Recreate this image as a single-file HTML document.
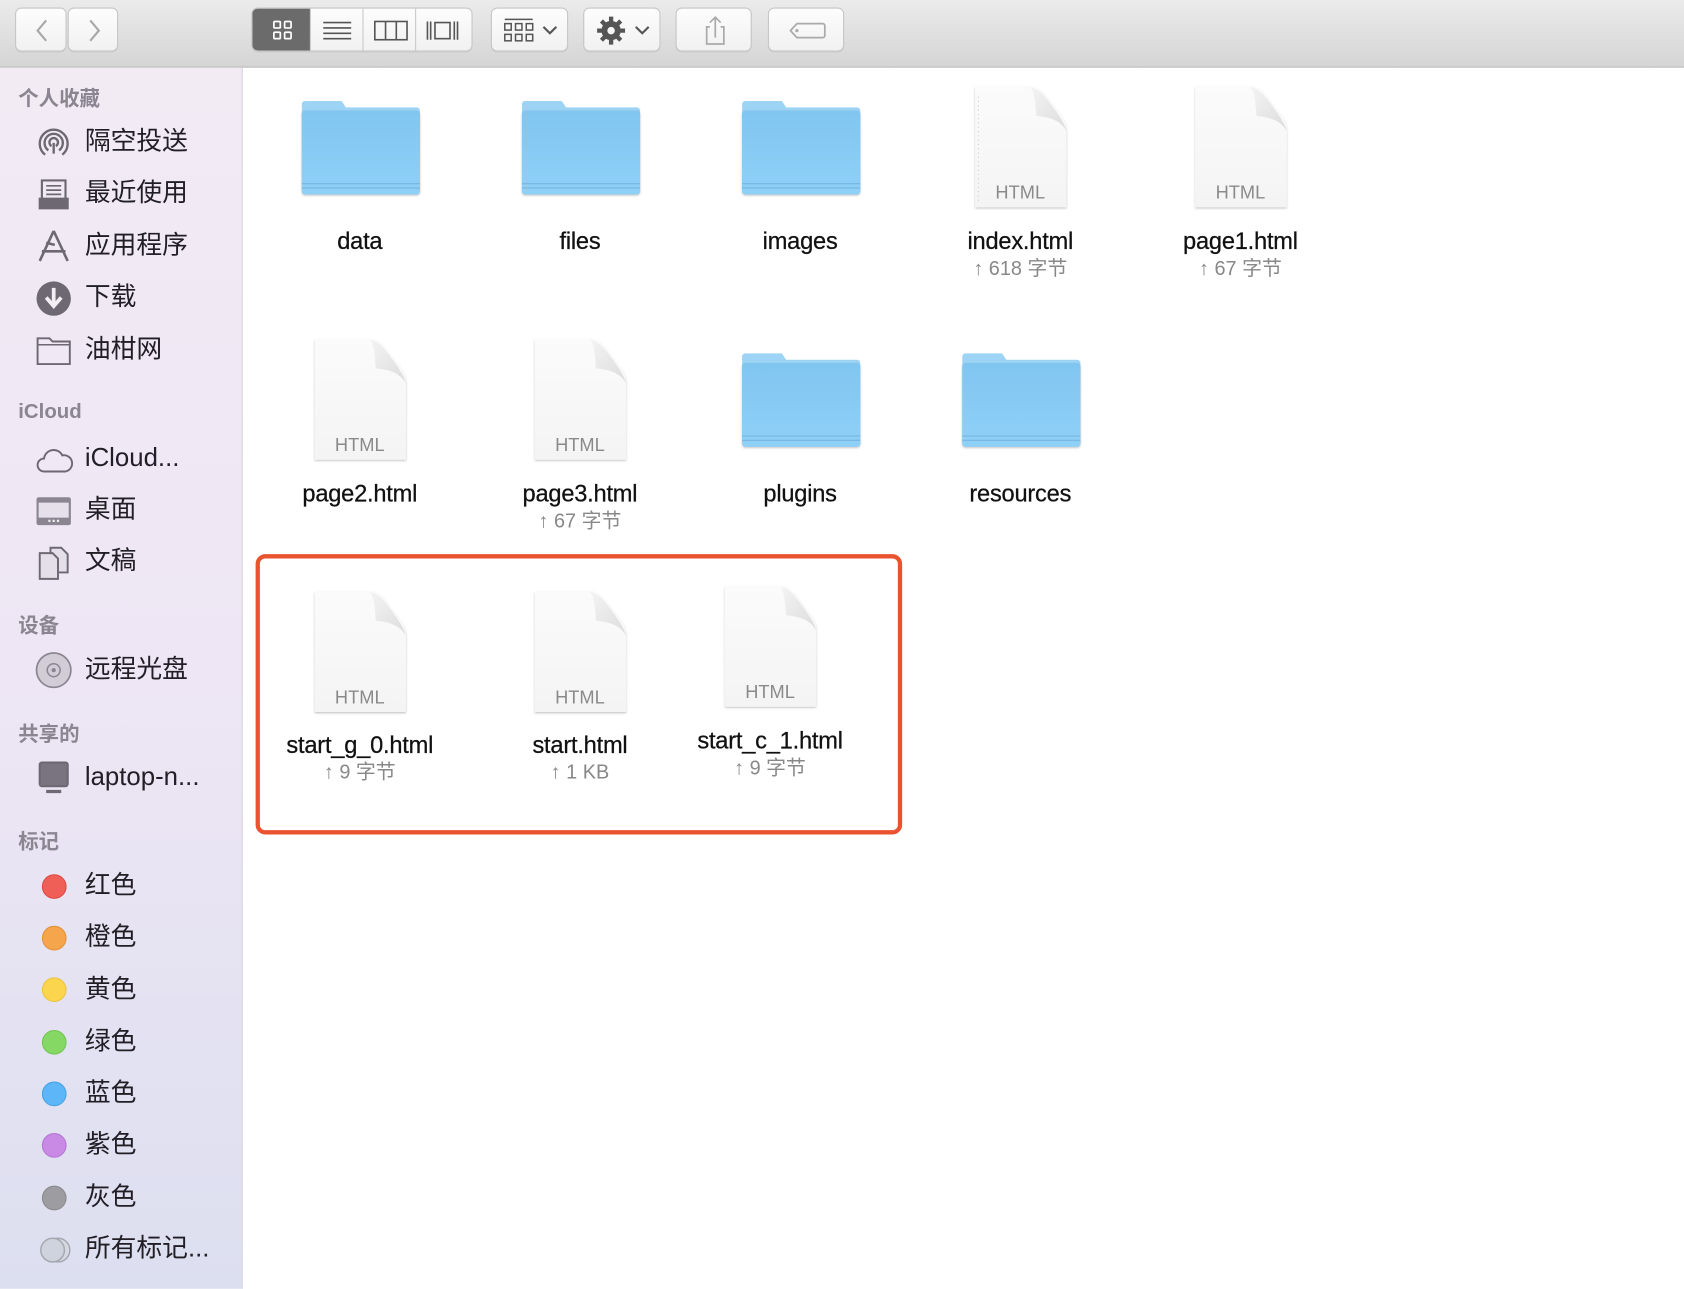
<!DOCTYPE html>
<html><head><meta charset="utf-8">
<style>
*{margin:0;padding:0;box-sizing:border-box}
html,body{width:1684px;height:1288px;overflow:hidden;background:#fff;font-family:"Liberation Sans","Noto Sans CJK SC",sans-serif}
#w{position:absolute;left:0;top:0;width:1568px;height:1200px;transform:scale(1.07398);transform-origin:0 0}
.tb{position:absolute;left:0;top:0;width:1568px;height:63px;background:linear-gradient(#ebebeb,#d5d5d5);border-bottom:1px solid #b5b5b5}
.btn{position:absolute;top:7px;height:41px;background:linear-gradient(#fdfdfd,#f1f1f1);border:1px solid #c6c6c6;border-radius:6px;box-shadow:0 1px 0 rgba(0,0,0,.06)}
.btn svg{position:absolute;left:0;top:0}
.sb{position:absolute;left:0;top:63px;width:226px;height:1137px;background:linear-gradient(#f2ebf4,#eee6f4 50%,#dcdff0);border-right:1px solid #d3d0dc}
.h{position:absolute;left:17px;font-size:19px;color:#8a8590;font-weight:bold}
.it{position:absolute;left:79px;font-size:24px;color:#221e26;line-height:30px}
.ic{position:absolute;left:33px}
.dot{position:absolute;left:39px;width:23px;height:23px;border-radius:50%}
.f{position:absolute;width:180px;text-align:center}
.nm{font-size:22px;color:#111;line-height:26px;letter-spacing:-0.2px;-webkit-text-stroke:0.25px #111}
.sub{font-size:18.5px;color:#888;line-height:24px}
.doc{position:absolute;overflow:visible}
.box{position:absolute;left:238px;top:516px;width:602px;height:261px;border:4px solid #e9532f;border-radius:9px}
</style></head><body><div id="w">
<svg width="0" height="0" style="position:absolute"><defs>
<linearGradient id="fg" x1="0" y1="0" x2="0" y2="1"><stop offset="0" stop-color="#80c6f1"/><stop offset="1" stop-color="#8fd0f7"/></linearGradient>
<linearGradient id="dg" x1="0" y1="0" x2="0" y2="1"><stop offset="0" stop-color="#fbfbfb"/><stop offset="1" stop-color="#f4f4f4"/></linearGradient>
<linearGradient id="cg" x1="0" y1="0" x2="1" y2="1"><stop offset="0" stop-color="#f4f4f4"/><stop offset="1" stop-color="#dcdcdc"/></linearGradient>
<filter id="sh" x="-10%" y="-10%" width="120%" height="120%"><feDropShadow dx="0" dy="1" stdDeviation="1" flood-opacity=".25"/></filter>
<symbol id="dc" viewBox="0 0 88 116" overflow="visible"><path d="M1 1H52C60 1 64 6 70 14L80 27C85 33 86 37 86 44V113H1Z" fill="url(#dg)" filter="url(#sh)"/><path d="M52 1C57 6 57 18 58 28C68 29 80 31 86 42C84 34 78 26 70 15C64 7 59 2 52 1Z" fill="url(#cg)"/></symbol>
<symbol id="fd" viewBox="0 0 112 92" overflow="visible"><path d="M1 4a3 3 0 0 1 3-3h34l4 6h66a3 3 0 0 1 3 3v75a3 3 0 0 1-3 3H4a3 3 0 0 1-3-3z" fill="#9dd3f4"/><rect x="1" y="10" width="110" height="78" rx="3" fill="url(#fg)" filter="url(#sh)"/><path d="M1 78h110M1 82h110" stroke="#74b6e2" stroke-width="1"/></symbol>
</defs></svg>
<div class="tb">
 <div class="btn" style="left:14px;width:48px"><svg width="48" height="41"><path d="M28 11 L20 20.5 L28 30" stroke="#a8a8a8" stroke-width="2" fill="none"/></svg></div>
 <div class="btn" style="left:63px;width:47px"><svg width="47" height="41"><path d="M20 11 L28 20.5 L20 30" stroke="#a8a8a8" stroke-width="2" fill="none"/></svg></div>
 <div class="btn" style="left:234px;width:206px;overflow:hidden">
  <div style="position:absolute;left:0;top:0;width:54px;height:41px;background:#6b6b6b"></div>
  <svg width="206" height="41">
   <g fill="none" stroke="#fff" stroke-width="1.6"><rect x="20" y="12" width="6" height="6" rx="1"/><rect x="30" y="12" width="6" height="6" rx="1"/><rect x="20" y="22" width="6" height="6" rx="1"/><rect x="30" y="22" width="6" height="6" rx="1"/></g>
   <g stroke="#555" stroke-width="1.5" fill="none"><path d="M66 13h26M66 18h26M66 23h26M66 28h26"/><rect x="114" y="12" width="30" height="17"/><path d="M124 12v17M134 12v17"/><rect x="170" y="13" width="14" height="15"/><path d="M163 12v17M166 12v17M188 12v17M191 12v17"/></g>
   <path d="M54 0v41M103 0v41M152 0v41" stroke="#c8c8c8"/>
  </svg></div>
 <div class="btn" style="left:457px;width:72px"><svg width="72" height="41"><g fill="none" stroke="#555" stroke-width="1.4"><path d="M12 10h26"/><rect x="12" y="14" width="6" height="6"/><rect x="22" y="14" width="6" height="6"/><rect x="32" y="14" width="6" height="6"/><rect x="12" y="24" width="6" height="6"/><rect x="22" y="24" width="6" height="6"/><rect x="32" y="24" width="6" height="6"/><path d="M48 17l6 6 6-6" stroke-width="2"/></g></svg></div>
 <div class="btn" style="left:543px;width:72px"><svg width="72" height="41"><g transform="translate(25 20.5)"><circle r="9" fill="#555"/><g stroke="#555" stroke-width="4"><path d="M0-13V13M-13 0H13M-9-9L9 9M9-9L-9 9"/></g><circle r="3.5" fill="#f5f5f5"/></g><path d="M48 17l6 6 6-6" stroke="#555" stroke-width="2" fill="none"/></svg></div>
 <div class="btn" style="left:629px;width:71px"><svg width="71" height="41"><g fill="none" stroke="#aaa" stroke-width="1.6"><path d="M31 17h-3v16h16V17h-3"/><path d="M36 27V8M31 13l5-5 5 5"/></g></svg></div>
 <div class="btn" style="left:715px;width:71px"><svg width="71" height="41"><path d="M26 14h24a2 2 0 0 1 2 2v9a2 2 0 0 1-2 2H26l-6-6.5z" fill="none" stroke="#aaa" stroke-width="1.6"/><circle cx="26" cy="20.5" r="1.5" fill="#aaa"/></svg></div>
</div>

<div class="sb"></div>
<div class="h" style="top:77px">个人收藏</div>
<svg class="ic" style="top:116px" width="34" height="34"><g fill="none" stroke="#6d6872" stroke-width="2.2"><path d="M9 28A13 13 0 1 1 25 28"/><path d="M12 24A8.5 8.5 0 1 1 22 24"/><path d="M15 20A4 4 0 1 1 19 20"/><path d="M17 17v10"/></g></svg>
<div class="it" style="top:117px">隔空投送</div>
<svg class="ic" style="top:164px" width="34" height="34"><path d="M6 4h22v20H6z" fill="none" stroke="#6d6872" stroke-width="2"/><path d="M10 9h14M10 13h14M10 17h14" stroke="#6d6872" stroke-width="1.6"/><path d="M3 20h28v11H3z" fill="#6d6872"/></svg>
<div class="it" style="top:165px">最近使用</div>
<svg class="ic" style="top:212px" width="34" height="34"><g stroke="#6d6872" stroke-width="2.4" fill="none"><path d="M17 3L4 31M17 3L30 31M6 22h22M10 14l8 2"/></g></svg>
<div class="it" style="top:214px">应用程序</div>
<svg class="ic" style="top:261px" width="34" height="34"><circle cx="17" cy="17" r="16" fill="#6d6872"/><path d="M17 7v16M10 16l7 8 7-8" stroke="#f3edf4" stroke-width="3.5" fill="none"/></svg>
<div class="it" style="top:262px">下载</div>
<svg class="ic" style="top:310px" width="34" height="34"><path d="M2 5h11l3 3h16v21H2z" fill="none" stroke="#6d6872" stroke-width="1.8"/><path d="M2 11h30" stroke="#6d6872" stroke-width="1.5"/></svg>
<div class="it" style="top:311px">油柑网</div>

<div class="h" style="top:373px">iCloud</div>
<svg class="ic" style="top:411px" width="36" height="34"><path d="M8 28a6 6 0 0 1 0-12 9 9 0 0 1 17-3 7.5 7.5 0 0 1 3 15z" fill="none" stroke="#6d6872" stroke-width="1.8"/></svg>
<div class="it" style="top:412px">iCloud...</div>
<svg class="ic" style="top:459px" width="34" height="34"><rect x="1" y="4" width="32" height="26" rx="2" fill="#8a8590"/><rect x="3" y="9" width="28" height="14" fill="#e6e0ea"/><path d="M12 26h2M16 26h2M20 26h2" stroke="#eee" stroke-width="2"/></svg>
<div class="it" style="top:460px">桌面</div>
<svg class="ic" style="top:507px" width="34" height="34"><g fill="#e4dfe8" stroke="#6d6872" stroke-width="1.8"><path d="M4 8h12l5 5v19H4z"/><path d="M14 3h10l6 6v17H21V13l-5-5h-2z"/></g></svg>
<div class="it" style="top:508px">文稿</div>

<div class="h" style="top:568px">设备</div>
<svg class="ic" style="top:607px" width="34" height="34"><circle cx="17" cy="17" r="16" fill="#d2ccd6" stroke="#8a8590" stroke-width="1.6"/><circle cx="17" cy="17" r="6" fill="none" stroke="#8a8590" stroke-width="1.4"/><circle cx="17" cy="17" r="2" fill="#8a8590"/></svg>
<div class="it" style="top:609px">远程光盘</div>
<div class="h" style="top:669px">共享的</div>
<svg class="ic" style="top:707px" width="34" height="36"><rect x="3" y="2" width="28" height="24" rx="3" fill="#6d6872"/><rect x="5" y="4" width="24" height="20" fill="#7a7480"/><path d="M10 30h14" stroke="#6d6872" stroke-width="3"/></svg>
<div class="it" style="top:709px">laptop-n...</div>

<div class="h" style="top:769px">标记</div>
<div class="dot" style="top:814px;background:#ef5f58;border:1px solid #dc4a44"></div><div class="it" style="top:810px">红色</div>
<div class="dot" style="top:862px;background:#f5a54c;border:1px solid #e4923a"></div><div class="it" style="top:858px">橙色</div>
<div class="dot" style="top:910px;background:#fcd54f;border:1px solid #ecc440"></div><div class="it" style="top:907px">黄色</div>
<div class="dot" style="top:959px;background:#86d864;border:1px solid #72c552"></div><div class="it" style="top:955px">绿色</div>
<div class="dot" style="top:1007px;background:#5cb6f7;border:1px solid #48a3e5"></div><div class="it" style="top:1003px">蓝色</div>
<div class="dot" style="top:1055px;background:#c98ae6;border:1px solid #b676d4"></div><div class="it" style="top:1051px">紫色</div>
<div class="dot" style="top:1104px;background:#9d9ca1;border:1px solid #8a898e"></div><div class="it" style="top:1100px">灰色</div>
<svg class="ic" style="top:1151px;left:36px" width="32" height="26"><circle cx="18" cy="13" r="11" fill="#d6d9e2" stroke="#a6a8b0" stroke-width="1.4"/><circle cx="13" cy="13" r="11" fill="#cfd3de" stroke="#a6a8b0" stroke-width="1.4"/></svg>
<div class="it" style="top:1148px">所有标记...</div>

<!-- row 1 -->
<svg class="doc" style="left:280px;top:93px" width="112" height="92"><use href="#fd"/></svg>
<svg class="doc" style="left:485px;top:93px" width="112" height="92"><use href="#fd"/></svg>
<svg class="doc" style="left:690px;top:93px" width="112" height="92"><use href="#fd"/></svg>
<svg class="doc" style="left:907px;top:80px" width="88" height="116"><use href="#dc"/><path d="M4 10v100" stroke="#ccc" stroke-dasharray="1 3"/><text x="43" y="105" text-anchor="middle" font-size="17" fill="#8a8a8a" font-family="Liberation Sans">HTML</text></svg>
<svg class="doc" style="left:1112px;top:80px" width="88" height="116"><use href="#dc"/><text x="43" y="105" text-anchor="middle" font-size="17" fill="#8a8a8a" font-family="Liberation Sans">HTML</text></svg>
<div class="f" style="left:245px;top:212px"><div class="nm">data</div></div>
<div class="f" style="left:450px;top:212px"><div class="nm">files</div></div>
<div class="f" style="left:655px;top:212px"><div class="nm">images</div></div>
<div class="f" style="left:860px;top:212px"><div class="nm">index.html</div><div class="sub">↑ 618 字节</div></div>
<div class="f" style="left:1065px;top:212px"><div class="nm">page1.html</div><div class="sub">↑ 67 字节</div></div>

<!-- row 2 -->
<svg class="doc" style="left:292px;top:315px" width="88" height="116"><use href="#dc"/><text x="43" y="105" text-anchor="middle" font-size="17" fill="#8a8a8a" font-family="Liberation Sans">HTML</text></svg>
<svg class="doc" style="left:497px;top:315px" width="88" height="116"><use href="#dc"/><text x="43" y="105" text-anchor="middle" font-size="17" fill="#8a8a8a" font-family="Liberation Sans">HTML</text></svg>
<svg class="doc" style="left:690px;top:328px" width="112" height="92"><use href="#fd"/></svg>
<svg class="doc" style="left:895px;top:328px" width="112" height="92"><use href="#fd"/></svg>
<div class="f" style="left:245px;top:447px"><div class="nm">page2.html</div></div>
<div class="f" style="left:450px;top:447px"><div class="nm">page3.html</div><div class="sub">↑ 67 字节</div></div>
<div class="f" style="left:655px;top:447px"><div class="nm">plugins</div></div>
<div class="f" style="left:860px;top:447px"><div class="nm">resources</div></div>

<!-- row 3 -->
<svg class="doc" style="left:292px;top:550px" width="88" height="116"><use href="#dc"/><text x="43" y="105" text-anchor="middle" font-size="17" fill="#8a8a8a" font-family="Liberation Sans">HTML</text></svg>
<svg class="doc" style="left:497px;top:550px" width="88" height="116"><use href="#dc"/><text x="43" y="105" text-anchor="middle" font-size="17" fill="#8a8a8a" font-family="Liberation Sans">HTML</text></svg>
<svg class="doc" style="left:674px;top:545px" width="88" height="116"><use href="#dc"/><text x="43" y="105" text-anchor="middle" font-size="17" fill="#8a8a8a" font-family="Liberation Sans">HTML</text></svg>
<div class="f" style="left:245px;top:681px"><div class="nm">start_g_0.html</div><div class="sub">↑ 9 字节</div></div>
<div class="f" style="left:450px;top:681px"><div class="nm">start.html</div><div class="sub">↑ 1 KB</div></div>
<div class="f" style="left:627px;top:677px"><div class="nm">start_c_1.html</div><div class="sub">↑ 9 字节</div></div>

<div class="box"></div>
</div></body></html>
